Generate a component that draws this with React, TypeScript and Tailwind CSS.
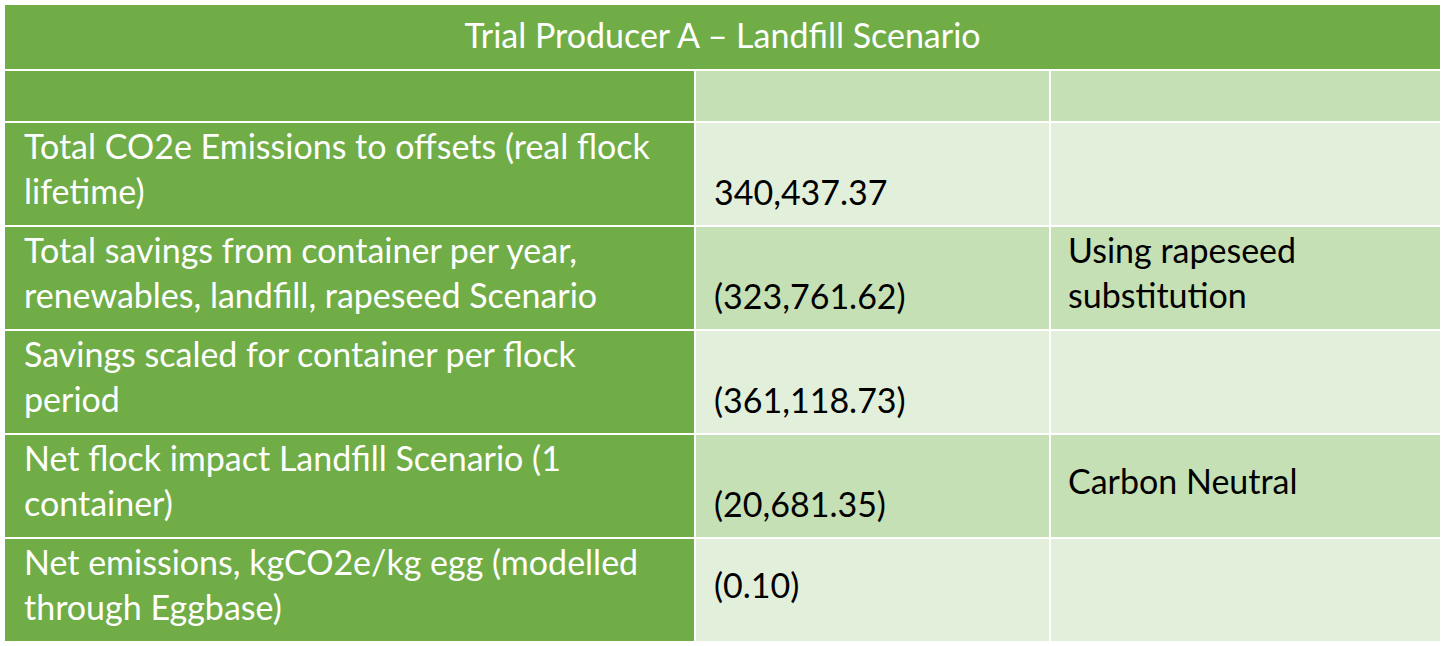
const rows: {
  label: string[];
  value: string;
  note: string[];
  tone: "light" | "mid";
  valueAlign: "end" | "center";
  noteAlign: "start" | "center";
}[] = [
  {
    label: ["Total CO2e Emissions to offsets (real flock", "lifetime)"],
    value: "340,437.37",
    note: [],
    tone: "light",
    valueAlign: "end",
    noteAlign: "start",
  },
  {
    label: ["Total savings from container per year,", "renewables, landfill, rapeseed Scenario"],
    value: "(323,761.62)",
    note: ["Using rapeseed", "substitution"],
    tone: "mid",
    valueAlign: "end",
    noteAlign: "start",
  },
  {
    label: ["Savings scaled for container per flock", "period"],
    value: "(361,118.73)",
    note: [],
    tone: "light",
    valueAlign: "end",
    noteAlign: "start",
  },
  {
    label: ["Net flock impact Landfill Scenario (1", "container)"],
    value: "(20,681.35)",
    note: ["Carbon Neutral"],
    tone: "mid",
    valueAlign: "end",
    noteAlign: "center",
  },
  {
    label: ["Net emissions, kgCO2e/kg egg (modelled", "through Eggbase)"],
    value: "(0.10)",
    note: [],
    tone: "light",
    valueAlign: "center",
    noteAlign: "start",
  },
];

export default function App() {
  return (
    <div
      className="bg-white w-[1444px] h-[646px] pt-[5px] pl-[5px]"
      style={{ fontFamily: "Lato, 'Open Sans', sans-serif" }}
    >
      <div className="grid grid-cols-[689px_353px_389px] gap-[2px] w-[1434px] text-[34px] leading-[45px] whitespace-nowrap">
        {/* title */}
        <div className="col-span-3 h-[64px] bg-[#70ad47] text-white flex items-center justify-center pb-[6px]">
          Trial Producer A – Landfill Scenario
        </div>

        {/* empty header */}
        <div className="h-[50px] bg-[#70ad47]" />
        <div className="h-[50px] bg-[#c5e0b4]" />
        <div className="h-[50px] bg-[#c5e0b4]" />

        {rows.map((r) => (
          <Row
            key={r.value}
            row={r}
            bg={r.tone === "mid" ? "bg-[#c5e0b4]" : "bg-[#e2efda]"}
          />
        ))}
      </div>
    </div>
  );
}

function Row({
  row,
  bg,
}: {
  row: (typeof rows)[number];
  bg: string;
}) {
  return (
    <>
      <div className="h-[102px] bg-[#70ad47] text-white px-[19px]">
        {row.label.map((l) => (
          <div key={l}>{l}</div>
        ))}
      </div>
      <div
        className={`h-[102px] ${bg} text-black px-[18px] flex ${
          row.valueAlign === "end" ? "items-end pb-[11px]" : "items-center pb-[12px]"
        }`}
      >
        {row.value}
      </div>
      <div
        className={`h-[102px] ${bg} text-black px-[17px] flex flex-col ${
          row.noteAlign === "center" ? "justify-center pb-[12px]" : "justify-start"
        }`}
      >
        {row.note.map((l) => (
          <div key={l}>{l}</div>
        ))}
      </div>
    </>
  );
}
